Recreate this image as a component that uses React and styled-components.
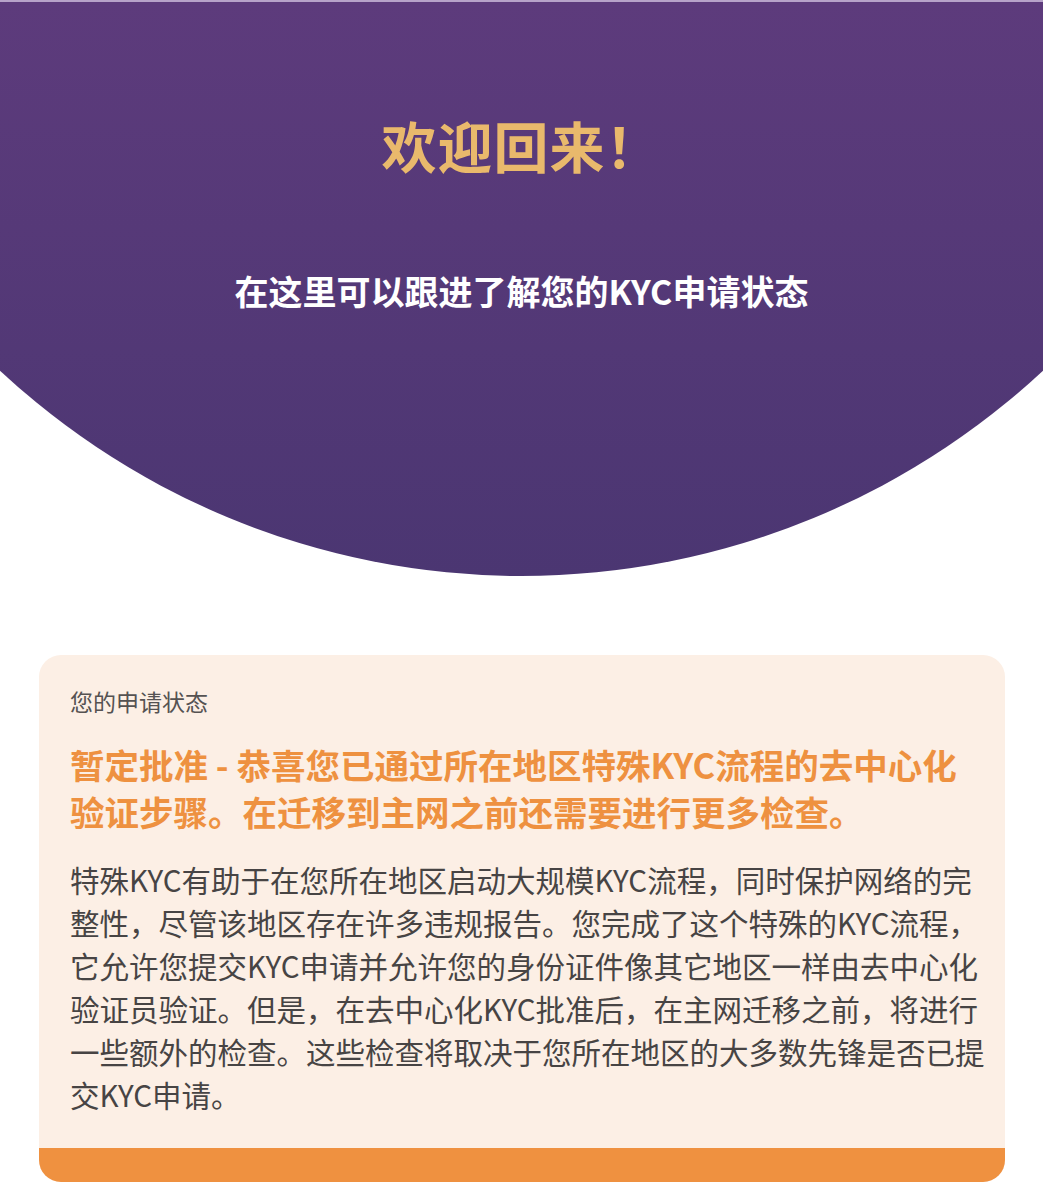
import React from "react";
import styled, { createGlobalStyle } from "styled-components";

const GlobalStyle = createGlobalStyle`
  html, body {
    margin: 0;
    padding: 0;
    background: #ffffff;
  }
  body {
    font-family: "Noto Sans CJK SC", "Noto Sans", sans-serif;
  }
  * {
    box-sizing: border-box;
  }
`;

const Page = styled.div`
  width: 1043px;
  min-height: 1200px;
  background: #ffffff;
  padding-bottom: 18px;
`;

const Hero = styled.header`
  height: 576px;
  border-top: 2px solid #b7a3c9;
  background: linear-gradient(180deg, #5d3b7c 0%, #4b3672 100%);
  clip-path: circle(765px at 50% -189px);
  display: flex;
  flex-direction: column;
  align-items: center;
  padding-top: 109px;
`;

const Title = styled.h1`
  margin: 0;
  font-size: 55px;
  line-height: 66px;
  font-weight: 600;
  letter-spacing: 1px;
  color: #e9b96c;
`;

const Subtitle = styled.p`
  margin: 91px 0 0;
  font-size: 34px;
  line-height: 45px;
  font-weight: 600;
  color: #ffffff;
`;

const Card = styled.section`
  margin: 79px 38px 0 39px;
  background: #fcefe5;
  border-radius: 22px;
  overflow: hidden;
  display: flex;
  flex-direction: column;
`;

const CardBody = styled.div`
  padding: 30px 16px 32px 31px;
  display: flex;
  flex-direction: column;
`;

const Label = styled.div`
  font-size: 23px;
  line-height: 32px;
  color: #555252;
`;

const Status = styled.h2`
  margin: 24px 0 0;
  font-size: 34.5px;
  line-height: 47px;
  font-weight: 700;
  color: #ee9140;
`;

const Description = styled.p`
  margin: 23px 0 0;
  font-size: 29.5px;
  line-height: 43px;
  color: #474444;
`;

const CardFooter = styled.div`
  height: 34px;
  background: #ef9140;
`;

export default function App() {
  return (
    <Page>
      <GlobalStyle />
      <Hero>
        <Title>欢迎回来！</Title>
        <Subtitle>在这里可以跟进了解您的KYC申请状态</Subtitle>
      </Hero>
      <Card>
        <CardBody>
          <Label>您的申请状态</Label>
          <Status>
            暂定批准 - 恭喜您已通过所在地区特殊KYC流程的去中心化验证步骤。在迁移到主网之前还需要进行更多检查。
          </Status>
          <Description>
            特殊KYC有助于在您所在地区启动大规模KYC流程，同时保护网络的完整性，尽管该地区存在许多违规报告。您完成了这个特殊的KYC流程，它允许您提交KYC申请并允许您的身份证件像其它地区一样由去中心化验证员验证。但是，在去中心化KYC批准后，在主网迁移之前，将进行一些额外的检查。这些检查将取决于您所在地区的大多数先锋是否已提交KYC申请。
          </Description>
        </CardBody>
        <CardFooter />
      </Card>
    </Page>
  );
}
